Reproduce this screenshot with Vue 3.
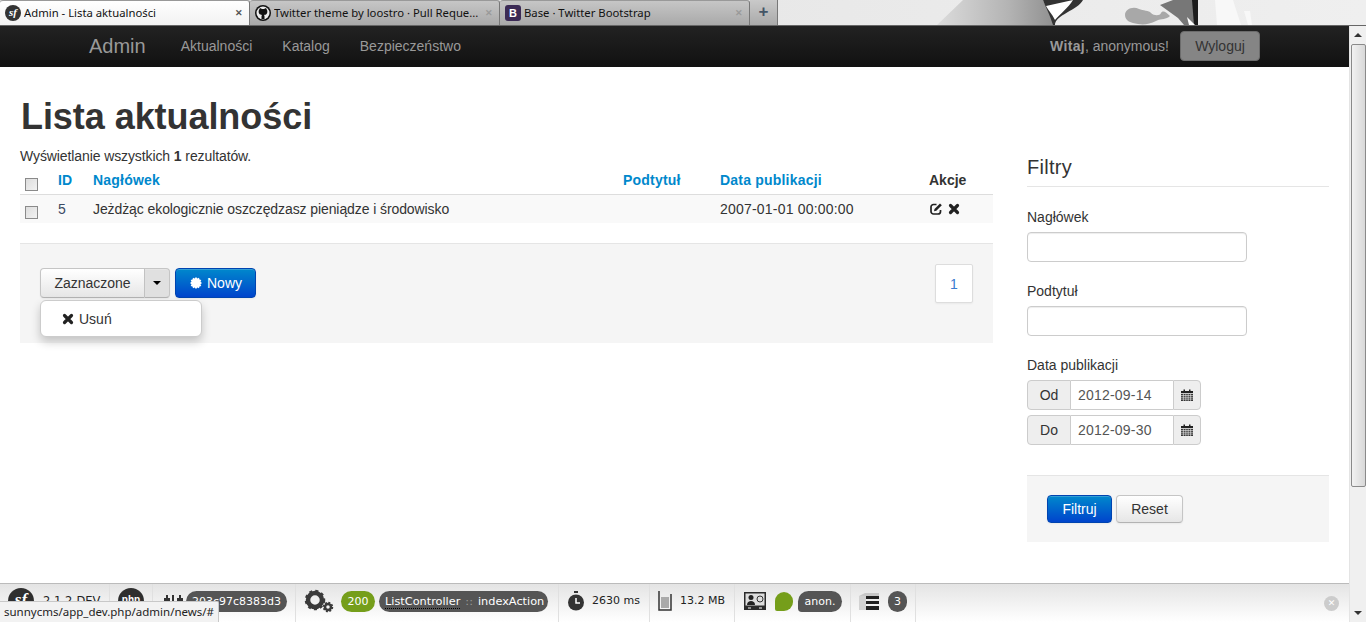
<template>
  <div class="page">
    <div class="tabstrip">
      <div v-for="t in tabs" :key="t.title" class="tab" :class="{ active: t.active }">
        <span v-if="t.icon === 'sf'" class="fav sf">sf</span>
        <svg v-else-if="t.icon === 'gh'" class="fav" viewBox="0 0 16 16">
          <circle cx="8" cy="8" r="8" fill="#111" />
          <circle cx="8" cy="8" r="6.5" fill="#eee" />
          <path d="M4 5l1-2 2 1h2l2-1 1 2c.6 1.5.4 3-.5 4-.6.6-1.3.8-2.5.9.4.4.5 1 .5 1.6V14H6.5v-2.5c0-.6.1-1.2.5-1.6C5.800 9.800 5.100 9.600 4.500 9 3.600 8 3.400 6.500 4 5z" fill="#111" />
        </svg>
        <span v-else class="fav boot">B</span>
        <span class="tab-title">{{ t.title }}</span>
        <span class="tab-x">✕</span>
      </div>
      <div class="newtab">+</div>
      <svg class="theme" viewBox="0 0 588 25" preserveAspectRatio="none">
        <defs>
          <linearGradient id="hair" x1="0" x2="1" y1="0" y2="0">
            <stop offset="0" stop-color="#dcdcdc" />
            <stop offset=".6" stop-color="#b4b4b4" />
            <stop offset="1" stop-color="#8f8f8f" />
          </linearGradient>
        </defs>
        <path d="M159 25L185 0h80l12 25z" fill="url(#hair)" />
        <path d="M265 0h40c-5 10-28 15-28 25h-2c-3-10-7-17-10-25z" fill="#333" />
        <path d="M268 6l27-6c-5 8-13 14-18 20-3-6-7-10-9-14z" fill="#fff" />
        <path d="M347 15c0-6 8-9 14-6 4 2 10 1 12 4 3 3 9 3 10 0 2-3 5-1 9 3-4 4-8 2-14 5-6 3-12 4-18 3-7-1-13-3-13-9z" fill="#a8a8a8" />
        <path d="M382 5l13-5h24v25h-13l-6-7z" fill="#777" />
        <path d="M414 0h6v25h-4z" fill="#1c1c1c" />
        <path d="M409 17l8 8h-6z" fill="#fff" />
        <path d="M439 25l-2-25h18l8 25zM470 25l-4-14 6 0 2 14z" fill="#f8f8f8" />
      </svg>
    </div>

    <div class="middle">
      <div class="viewport">
        <nav class="navbar">
          <a class="brand">Admin</a>
          <a v-for="l in navLinks" :key="l" class="navlink">{{ l }}</a>
          <span class="spacer"></span>
          <span class="welcome"><b>Witaj</b>, anonymous!</span>
          <button class="logout">Wyloguj</button>
        </nav>

        <main class="content">
          <h1>Lista aktualności</h1>
          <div class="columns">
            <section class="list">
              <p class="count">Wyświetlanie wszystkich <b>1</b> rezultatów.</p>
              <div class="row head">
                <span><i class="check"></i></span>
                <a>ID</a>
                <a>Nagłówek</a>
                <a>Podtytuł</a>
                <a>Data publikacji</a>
                <b>Akcje</b>
              </div>
              <div class="row body">
                <span><i class="check"></i></span>
                <span class="id">5</span>
                <span class="title">Jeżdżąc ekologicznie oszczędzasz pieniądze i środowisko</span>
                <span></span>
                <span class="pubdate">2007-01-01 00:00:00</span>
                <span class="acts">
                  <svg viewBox="0 0 14 14" width="14" height="14">
                    <path d="M7.5 2.500H4.500a2.500 2.500 0 0 0-2.500 2.500v4.500a2.500 2.500 0 0 0 2.500 2.500H9a2.500 2.500 0 0 0 2.500-2.500V8" fill="none" stroke="#222" stroke-width="1.700" />
                    <path d="M5.500 7l5.500-5.500 1.800 1.800L7.300 8.800 5 9.200z" fill="#222" />
                  </svg>
                  <svg viewBox="0 0 12 12" width="12" height="12"><path d="M2.500 2.500l7 7M9.500 2.500l-7 7" stroke="#222" stroke-width="3.200" stroke-linecap="round" /></svg>
                </span>
              </div>

              <div class="actions">
                <div class="btn-group">
                  <button class="btn seg-left">Zaznaczone</button>
                  <button class="btn seg-right"><i class="caret"></i></button>
                  <div class="menu">
                    <a class="menu-item">
                      <svg viewBox="0 0 12 12" width="12" height="12"><path d="M2.500 2.500l7 7M9.500 2.500l-7 7" stroke="#222" stroke-width="3.200" stroke-linecap="round" /></svg>
                      Usuń
                    </a>
                  </div>
                </div>
                <button class="btn primary nowy">
                  <svg viewBox="0 0 14 14" width="14" height="14">
                    <path d="M7 1l1.300 1.500L10 1.700l.5 1.800 1.800.5-.8 1.700L13 7l-1.500 1.300.8 1.700-1.800.5-.5 1.800-1.700-.8L7 13l-1.300-1.500-1.700.8-.5-1.800-1.800-.5.8-1.700L1 7l1.500-1.300L1.700 4l1.800-.5.5-1.800 1.700.8z" fill="#fff" />
                  </svg>
                  Nowy
                </button>
                <span class="spacer"></span>
                <a class="pager">1</a>
              </div>
            </section>

            <aside class="filters">
              <h3>Filtry</h3>
              <label>Nagłówek</label>
              <input class="field" type="text" />
              <label>Podtytuł</label>
              <input class="field" type="text" />
              <label>Data publikacji</label>
              <div v-for="d in dates" :key="d.label" class="daterow">
                <span class="addon first">{{ d.label }}</span>
                <span class="dateval">{{ d.value }}</span>
                <span class="addon last">
                  <svg viewBox="0 0 12 12" width="12" height="12">
                    <path d="M0 2h2.500V.5H4V2h4V.5h1.500V2H12v2H0z" fill="#222" />
                    <path d="M0 4.800h12V12H0z" fill="#333" />
                    <path d="M0 6.500h12M0 8.300h12M0 10.100h12M2.400 5v7M4.800 5v7M7.200 5v7M9.600 5v7" stroke="#eee" stroke-width=".6" />
                  </svg>
                </span>
              </div>
              <div class="filter-actions">
                <button class="btn primary">Filtruj</button>
                <button class="btn">Reset</button>
              </div>
            </aside>
          </div>
        </main>

        <footer class="toolbar">
          <div class="tb-block first-block">
            <span class="ball sf-ball">sf</span>
            <span class="ver">2.1.2-DEV</span>
          </div>
          <div class="tb-block php-block">
            <span class="ball small">php</span>
          </div>
          <div class="tb-block token-block">
            <svg viewBox="0 0 24 22" width="24" height="22">
              <path d="M3 8h2V5h2v3h2v7H3zM11 5h2v10h-2zM16 8h2V5h2v3h2v7h-6z" fill="#333" />
            </svg>
            <span class="pill hash">203c97c8383d3</span>
          </div>
          <div class="tb-block ctrl-block">
            <svg viewBox="0 0 30 26" width="30" height="26">
              <circle cx="11" cy="12" r="7" fill="none" stroke="#3a3a3a" stroke-width="4.500" />
              <circle cx="11" cy="12" r="9" fill="none" stroke="#3a3a3a" stroke-width="2.500" stroke-dasharray="3 3.060" />
              <circle cx="24" cy="19" r="3" fill="none" stroke="#3a3a3a" stroke-width="2.500" />
              <circle cx="24" cy="19" r="4.500" fill="none" stroke="#3a3a3a" stroke-width="1.500" stroke-dasharray="2 1.500" />
            </svg>
            <span class="pill green">200</span>
            <span class="pill ctrl"><span class="under">ListController</span><span class="sep">::</span>indexAction</span>
          </div>
          <div class="tb-block time-block">
            <svg viewBox="0 0 18 20" width="18" height="20">
              <rect x="7" y="0" width="4" height="2" fill="#333" />
              <circle cx="9" cy="11.500" r="8" fill="#333" />
              <path d="M9 7v5h4" fill="none" stroke="#fff" stroke-width="1.500" />
            </svg>
            <span class="metric">2630 ms</span>
          </div>
          <div class="tb-block mem-block">
            <svg viewBox="0 0 14 20" width="14" height="20">
              <path d="M1 0v19h12V3" fill="none" stroke="#333" stroke-width="1.500" />
              <rect x="3" y="6" width="8" height="11" fill="#aaa" />
            </svg>
            <span class="metric">13.2 MB</span>
          </div>
          <div class="tb-block user-block">
            <svg viewBox="0 0 22 18" width="22" height="18">
              <rect width="22" height="18" fill="#2b2b2b" />
              <rect x="1.500" y="1.500" width="19" height="12" fill="#ddd" />
              <circle cx="7" cy="5.500" r="2.500" fill="#222" />
              <path d="M3 13c0-3 2-4 4-4s4 1 4 4z" fill="#222" />
              <circle cx="16" cy="7" r="3" fill="none" stroke="#333" />
              <path d="M4 16h3M15 16h3" stroke="#fff" />
            </svg>
            <span class="leaf"></span>
            <span class="pill anon">anon.</span>
          </div>
          <div class="tb-block db-block">
            <svg viewBox="0 0 20 17" width="20" height="17">
              <path d="M0 3l6-3h14v3H0z" fill="#c8c8c8" />
              <path d="M0 3h7v14H0z" fill="#d2d2d2" />
              <path d="M7 3h13v3H7zM7 8h13v3H7zM7 13h13v4H7z" fill="#222" />
            </svg>
            <span class="pill num">3</span>
          </div>
          <span class="spacer"></span>
          <span class="tb-close">✕</span>
        </footer>
      </div>

      <div class="scrollbar">
        <span class="arrow up"></span>
        <div class="thumb"></div>
        <span class="spacer"></span>
        <span class="arrow down"></span>
      </div>
    </div>

    <div class="status">sunnycms/app_dev.php/admin/news/#</div>
  </div>
</template>

<script setup>
const tabs = [
  { title: 'Admin - Lista aktualności', icon: 'sf', active: true },
  { title: 'Twitter theme by loostro · Pull Reque...', icon: 'gh' },
  { title: 'Base · Twitter Bootstrap', icon: 'bs' }
]
const navLinks = ['Aktualności', 'Katalog', 'Bezpieczeństwo']
const dates = [
  { label: 'Od', value: '2012-09-14' },
  { label: 'Do', value: '2012-09-30' }
]
</script>

<style>
html, body { margin: 0; overflow: hidden; }
</style>

<style scoped>
.page {
  position: relative;
  width: 1366px;
  height: 622px;
  display: flex;
  flex-direction: column;
  overflow: hidden;
  background: #fff;
  color: #333;
  font: 14px/20px "Liberation Sans", Arial, sans-serif;
}
.spacer { flex: 1; }

.tabstrip {
  position: relative;
  height: 26px;
  flex: none;
  display: flex;
  background: linear-gradient(90deg, #d6d6d6 0, #e4e4e4 30%, #efefef 100%);
  border-bottom: 1px solid #666;
  box-sizing: border-box;
  font-family: "Noto Sans", "Open Sans", sans-serif;
  font-size: 11.3px;
  color: #111;
}
.theme { position: absolute; left: 778px; top: 0; width: 588px; height: 25px; }
.tab {
  width: 250px;
  height: 25px;
  box-sizing: border-box;
  padding: 0 2px 0 5px;
  display: flex;
  align-items: center;
  gap: 3px;
  background: linear-gradient(#c6c6c6, #a9a9a9);
  border-right: 1px solid #777;
  border-top: 1px solid #999;
  border-radius: 3px 3px 0 0;
  white-space: nowrap;
}
.tab.active { background: linear-gradient(#fff, #f2f2f2); }
.fav { width: 16px; height: 16px; flex: none; }
.sf {
  border-radius: 50%;
  background: #333;
  color: #fff;
  font: italic bold 11px/15px "Liberation Serif", serif;
  text-align: center;
}
.boot {
  background: #3b2a55;
  border-radius: 3px;
  color: #fff;
  font: bold 11px/16px "Liberation Sans", sans-serif;
  text-align: center;
}
.tab-title { flex: 1; overflow: hidden; }
.tab-x { font-size: 9px; width: 12px; color: #9a9a9a; font-weight: bold; }
.tab.active .tab-x { color: #555; }
.newtab {
  width: 28px;
  height: 25px;
  text-align: center;
  font: bold 17px/24px "Liberation Sans", sans-serif;
  color: #456;
  background: linear-gradient(#c9c9c9, #aaa);
  border-right: 1px solid #777;
  box-sizing: border-box;
}

.middle { flex: 1; display: flex; min-height: 0; }
.viewport { flex: 1; min-width: 0; display: flex; flex-direction: column; }
.scrollbar {
  width: 17px;
  display: flex;
  flex-direction: column;
  align-items: center;
  background: #f0f0f0;
  border-left: 1px solid #e4e4e4;
  box-sizing: border-box;
}
.arrow { border: 4px solid transparent; flex: none; }
.arrow.up {
  margin: 7px 0 7px;
  border-top: 0;
  border-bottom-color: #333;
}
.arrow.down {
  margin: 0 0 7px;
  border-bottom: 0;
  border-top-color: #333;
}
.thumb {
  width: 15px;
  height: 443px;
  box-sizing: border-box;
  border: 1px solid #8a8a8a;
  border-radius: 2px;
  background: linear-gradient(90deg, #f2f2f2, #d8d8d8);
}

.navbar {
  height: 41px;
  flex: none;
  box-sizing: border-box;
  display: flex;
  align-items: center;
  padding: 0 89px 1px;
  background: linear-gradient(#222, #111);
  color: #999;
}
.brand { font-size: 20px; margin-right: 35px; color: #999; }
.navlink { margin-right: 30px; color: #999; }
.welcome { margin-right: 11px; }
.welcome b { letter-spacing: .3px; }
.logout {
  width: 80px;
  height: 30px;
  background: #858585;
  border: 1px solid #6c6c6c;
  border-radius: 4px;
  color: #333;
  font: 14px "Liberation Sans", sans-serif;
}

.content { flex: 1; min-height: 0; padding: 0 20px; }
h1 {
  margin: 30px 0 10px 1px;
  font-size: 36px;
  line-height: 40px;
  letter-spacing: -.06px;
  color: #333;
}
.columns { display: flex; align-items: flex-start; }
.list { width: 973px; }
.count { margin: 0; height: 19px; line-height: 19px; letter-spacing: -.1px; }
.row {
  display: grid;
  grid-template-columns: 38px 35px 530px 97px 209px 64px;
  align-items: center;
}
.row.head { height: 29px; border-bottom: 1px solid #ddd; box-sizing: border-box; }
.row.head a { color: #0088cc; font-weight: bold; letter-spacing: .2px; }
.row.head b { color: #333; }
.row.body { height: 28px; background: #f9f9f9; }
.check {
  display: block;
  width: 11px;
  height: 11px;
  margin: 6px 0 0 5px;
  border: 1px solid #8a8a8a;
  background: linear-gradient(135deg, #ddd, #f2f2f2);
}
.row.head .check { margin-top: 9px; }
.id { color: #3b4a63; }
.title { letter-spacing: -.09px; }
.pubdate { letter-spacing: .2px; }
.acts { display: flex; align-items: center; gap: 5px; }

.actions {
  margin-top: 20px;
  height: 100px;
  box-sizing: border-box;
  padding: 20px;
  display: flex;
  align-items: flex-start;
  background: #f5f5f5;
  border-top: 1px solid #e5e5e5;
}
.btn-group { position: relative; display: flex; margin-right: 5px; margin-top: 4px; }
.btn {
  height: 30px;
  padding: 0 14px;
  border: 1px solid #c5c5c5;
  border-bottom-color: #b3b3b3;
  border-radius: 4px;
  background: linear-gradient(#fff, #e6e6e6);
  color: #333;
  font: 14px "Liberation Sans", sans-serif;
  box-shadow: inset 0 1px 0 rgba(255,255,255,.2), 0 1px 2px rgba(0,0,0,.05);
}
.seg-left { width: 105px; padding: 0; border-radius: 4px 0 0 4px; letter-spacing: -.05px; }
.seg-right {
  width: 25px;
  padding: 0;
  border-left: 0;
  border-radius: 0 4px 4px 0;
  background: #e0e0e0;
  display: flex;
  align-items: center;
  justify-content: center;
}
.caret {
  border: 4px solid transparent;
  border-bottom: 0;
  border-top-color: #000;
}
.primary {
  background: linear-gradient(#0088cc, #0044cc);
  border-color: #0044b0;
  color: #fff;
}
.nowy {
  width: 81px;
  padding: 0;
  margin-top: 4px;
  display: flex;
  align-items: center;
  justify-content: center;
  gap: 4px;
}
.menu {
  position: absolute;
  left: 0;
  top: 32px;
  width: 162px;
  height: 37px;
  box-sizing: border-box;
  background: #fff;
  border: 1px solid #ccc;
  border-radius: 6px;
  box-shadow: 0 5px 10px rgba(0,0,0,.2);
  display: flex;
  align-items: center;
  padding-left: 21px;
}
.menu-item { display: flex; align-items: center; gap: 5px; color: #333; }
.pager {
  width: 38px;
  height: 39px;
  box-sizing: border-box;
  background: #fff;
  border: 1px solid #ddd;
  border-radius: 2px;
  box-shadow: 0 1px 2px rgba(0,0,0,.05);
  color: #3a7bd0;
  text-align: center;
  line-height: 38px;
}

.filters { width: 302px; margin-left: 34px; margin-top: 5px; display: flex; flex-direction: column; align-items: flex-start; }
.filters h3 {
  width: 100%;
  margin: 0 0 20px;
  padding-bottom: 4px;
  font-size: 20px;
  line-height: 30px;
  font-weight: normal;
  letter-spacing: .3px;
  border-bottom: 1px solid #e5e5e5;
  color: #333;
}
.filters label { display: block; margin-bottom: 5px; }
.field {
  width: 220px;
  height: 30px;
  box-sizing: border-box;
  margin-bottom: 19px;
  border: 1px solid #ccc;
  border-radius: 4px;
  background: #fff;
  box-shadow: inset 0 1px 1px rgba(0,0,0,.075);
}
.daterow { display: flex; height: 30px; margin-bottom: 5px; }
.addon {
  box-sizing: border-box;
  height: 30px;
  background: #eee;
  border: 1px solid #ccc;
  line-height: 28px;
  text-align: center;
  color: #333;
}
.addon.first { width: 44px; border-radius: 4px 0 0 4px; }
.addon.last {
  width: 28px;
  border-radius: 0 4px 4px 0;
  display: flex;
  align-items: center;
  justify-content: center;
}
.dateval {
  width: 102px;
  height: 30px;
  box-sizing: border-box;
  border: solid #ccc;
  border-width: 1px 0;
  padding-left: 7px;
  line-height: 28px;
  letter-spacing: .2px;
  color: #555;
  background: #fff;
}
.filter-actions {
  width: 100%;
  box-sizing: border-box;
  margin-top: 25px;
  height: 67px;
  padding: 19px 20px;
  display: flex;
  gap: 4px;
  background: #f5f5f5;
  border-top: 1px solid #e5e5e5;
}
.filter-actions .btn { height: 28px; width: 67px; padding: 0; }
.filter-actions .primary { width: 65px; }

.toolbar {
  height: 39px;
  flex: none;
  box-sizing: border-box;
  display: flex;
  align-items: stretch;
  background: linear-gradient(#e4e4e4, #fff);
  border-top: 1px solid #bbb;
  font-family: "DejaVu Sans", Verdana, sans-serif;
  font-size: 11px;
  color: #222;
}
.tb-block {
  display: flex;
  align-items: center;
  gap: 6px;
  padding-bottom: 4px;
  box-sizing: border-box;
  border-right: 1px solid #e0e0e0;
}
.first-block { width: 110px; padding-left: 8px; gap: 9px; }
.ball {
  width: 26px;
  height: 26px;
  border-radius: 50%;
  background: #2e2e2e;
  flex: none;
  color: #fff;
  font: bold 10px/24px "Liberation Sans", sans-serif;
  text-align: center;
}
.sf-ball { font: italic bold 17px/24px "Liberation Serif", serif; }
.ball.small { margin-left: 8px; }
.ver { color: #222; font-size: 11.5px; }
.php-block { width: 43px; }
.token-block { width: 143px; padding-left: 8px; gap: 1px; }
.pill {
  height: 21px;
  line-height: 21px;
  padding: 0 7px;
  border-radius: 11px;
  background: #555;
  color: #fff;
  white-space: nowrap;
}
.hash { padding: 0 6px; }
.ctrl-block { width: 263px; padding-left: 8px; gap: 4px; }
.ctrl-block svg { margin-right: 3px; }
.green { background: #759e1a; padding: 0 6.5px; }
.ctrl { padding: 0 4px 0 6px; font-size: 11.3px; }
.under { border-bottom: 1px dotted #000; }
.sep { color: #999; margin: 0 5px; }
.time-block { width: 91px; padding-left: 8px; gap: 7px; }
.metric { color: #222; }
.mem-block { width: 85px; padding-left: 8px; gap: 8px; }
.user-block { width: 116px; padding-left: 9px; gap: 9px; }
.leaf { width: 18px; height: 19px; background: #759e1a; border-radius: 9px 9px 9px 2px; margin-right: -4px; }
.anon { border-radius: 11px 11px 11px 4px; padding: 0 6.5px; }
.db-block { width: 65px; padding-left: 8px; gap: 9px; }
.num { padding: 0 6px; border-radius: 10px; background: #555; }
.tb-close {
  align-self: center;
  width: 15px;
  height: 15px;
  margin-right: 10px;
  border-radius: 50%;
  background: #ccc;
  color: #fff;
  font-size: 9px;
  line-height: 15px;
  text-align: center;
  font-weight: bold;
}
.status {
  position: absolute;
  left: 0;
  bottom: 0;
  height: 21px;
  padding: 0 4px;
  box-sizing: border-box;
  line-height: 20px;
  background: #f2f2f2;
  border: solid #c8c8c8;
  border-width: 1px 1px 0 0;
  border-radius: 0 2px 0 0;
  font-family: "Noto Sans", "Open Sans", sans-serif;
  font-size: 11.5px;
  color: #222;
}
</style>
